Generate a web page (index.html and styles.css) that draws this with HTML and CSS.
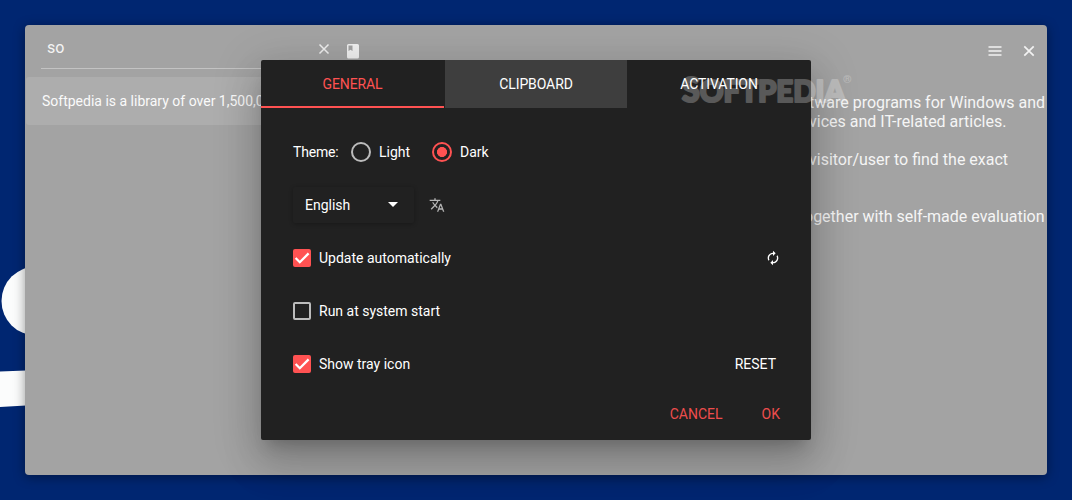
FILE: index.html
```html
<!DOCTYPE html>
<html lang="en">
<head>
<meta charset="utf-8">
<title>Clipboard settings</title>
<link rel="stylesheet" href="styles.css">
</head>
<body>
<div class="desktop">
  <svg class="wallpaper" width="26" height="500" viewBox="0 0 26 500"><circle cx="36" cy="301" r="34.500"/><path d="M0 371.500L26 370.500V405.500L0 407Z"/></svg>
  <main class="window">
    <section class="list-pane">
      <header class="search">
        <span class="query">so</span>
        <svg class="clear" width="12" height="12" viewBox="0 0 12 12"><path d="M1.500 1.500l9 9m0-9l-9 9"/></svg>
        <svg class="book" width="12" height="15" viewBox="0 0 12 15"><path fill-rule="evenodd" d="M1.500 0h9A1.500 1.500 0 0 1 12 1.500v11.500A1.500 1.500 0 0 1 10.500 14.500h-9A1.500 1.500 0 0 1 0 13V1.500A1.500 1.500 0 0 1 1.500 0zM1.500 1.500v5.500l2-1.300 2 1.300V1.500z"/></svg>
      </header>
      <div class="entry">Softpedia is a library of over 1,500,000</div>
    </section>
    <section class="preview">
      <nav class="window-actions">
        <svg width="14" height="12" viewBox="0 0 14 12"><path d="M.5 2h13M.5 6h13M.5 10h13"/></svg>
        <svg width="12" height="12" viewBox="0 0 12 12"><path d="M1.300 1.300l9.400 9.400m0-9.400l-9.400 9.400"/></svg>
      </nav>
      <div class="copy">
        <p>tware programs for Windows and</p>
        <p>vices and IT-related articles.</p>
        <p class="spaced">visitor/user to find the exact</p>
        <p class="last">ogether with self-made evaluation</p>
      </div>
    </section>
    <section class="dialog">
      <nav class="tabs">
        <span class="tab active">GENERAL</span>
        <span class="tab hover">CLIPBOARD</span>
        <span class="tab">ACTIVATION</span>
      </nav>
      <div class="options">
        <div class="row">
          <span class="theme">Theme:</span>
          <span class="radio"></span><span class="light">Light</span>
          <span class="radio on"></span><span>Dark</span>
        </div>
        <div class="row">
          <div class="select"><span>English</span><svg width="10" height="5" viewBox="0 0 10 5"><path d="M0 0h10L5 5z"/></svg></div>
          <svg class="translate" width="16" height="16" viewBox="0 0 24 24"><path d="M12.870 15.070l-2.540-2.510.03-.03A17.520 17.520 0 0 0 14.070 6H17V4h-7V2H8v2H1v2h11.170C11.500 7.920 10.440 9.750 9 11.350 8.070 10.320 7.300 9.190 6.690 8h-2c.73 1.630 1.730 3.170 2.980 4.560l-5.090 5.020L4 19l5-5 3.110 3.110.76-2.040zM18.500 10h-2L12 22h2l1.120-3h4.750L21 22h2l-4.500-12zm-2.620 7l1.620-4.330L19.120 17h-3.240z"/></svg>
        </div>
        <div class="row">
          <span class="check on"><svg width="18" height="18" viewBox="0 0 18 18"><path d="M2.600 9l4.200 4.200 8.800-8.800"/></svg></span><span>Update automatically</span>
          <svg class="refresh" width="16" height="16" viewBox="0 0 24 24"><path d="M12 6v3l4-4-4-4v3c-4.420 0-8 3.580-8 8 0 1.570.46 3.030 1.240 4.260L6.700 14.800A5.870 5.870 0 0 1 6 12c0-3.310 2.690-6 6-6zm6.760 1.740L17.300 9.200c.44.84.7 1.790.7 2.800 0 3.310-2.690 6-6 6v-3l-4 4 4 4v-3c4.420 0 8-3.580 8-8 0-1.570-.46-3.030-1.240-4.260z"/></svg>
        </div>
        <div class="row"><span class="check"></span><span>Run at system start</span></div>
        <div class="row">
          <span class="check on"><svg width="18" height="18" viewBox="0 0 18 18"><path d="M2.600 9l4.200 4.200 8.800-8.800"/></svg></span><span>Show tray icon</span>
          <span class="reset">RESET</span>
        </div>
      </div>
      <footer class="buttons"><span>CANCEL</span><span>OK</span></footer>
    </section>
  </main>
  <svg class="watermark" width="180" height="40" viewBox="0 0 180 40">
    <text class="brand" x="7" y="32" textLength="163" lengthAdjust="spacingAndGlyphs"><tspan class="initial">S</tspan>OFTPEDIA</text>
    <text class="mark" x="168" y="13">®</text>
  </svg>
</div>
</body>
</html>
```
FILE: styles.css
```css
* { box-sizing: border-box; }
body { margin: 0; font-family: Roboto, "Liberation Sans", sans-serif; }
.desktop { position: relative; width: 1072px; height: 500px; padding: 25px; background: #002671; overflow: hidden; }
.wallpaper { position: absolute; left: 0; top: 0; fill: #fbfcfc; }
.window { position: relative; display: flex; width: 1022px; height: 450px; background: #a3a3a3; border-radius: 4px; box-shadow: 0 2px 12px rgba(0,0,0,.4); }
.list-pane { width: 340px; }
.search { display: flex; margin-left: 16px; width: 320px; height: 44px; border-bottom: 1px solid #c3c3c3; color: #f4f4f4; }
.query { width: 272px; padding: 13px 0 0 6px; font-size: 16px; line-height: 20px; }
.clear { margin: 18px 0 0 5px; stroke: #f0f0f0; stroke-width: 1.500; fill: none; }
.book { margin: 19px 0 0 17px; fill: #f1f1f1; }
.entry { height: 48px; margin: 8px 0 0 1px; padding: 0 16px; background: #adadad; border-radius: 3px; color: #fafafa; font-size: 14px; line-height: 49px; white-space: nowrap; overflow: hidden; }
.preview { width: 682px; }
.window-actions { display: flex; justify-content: flex-end; gap: 21px; padding: 20px 12px 0 0; height: 68px; }
.window-actions svg { fill: none; stroke: #f2f2f2; stroke-width: 1.700; }
.copy { padding-left: 444px; color: #f5f5f5; font-size: 16px; line-height: 19px; white-space: nowrap; }
.copy p { margin: 0; }
.copy .spaced { margin-top: 19px; }
.copy .last { margin: 38px 0 0 -5px; }
.dialog { position: absolute; left: 236px; top: 35px; width: 550px; height: 380px; background: #212121; border-radius: 2px; color: #fff; font-size: 14px; box-shadow: 0 11px 15px -7px rgba(0,0,0,.2), 0 24px 38px 3px rgba(0,0,0,.14), 0 9px 46px 8px rgba(0,0,0,.12); }
.tabs { display: grid; grid-template: 48px / 183px 183px 184px; height: 48px; }
.tab { height: 48px; text-align: center; line-height: 48px; letter-spacing: -.1px; }
.tab.active { color: #ff5252; box-shadow: inset 0 -2px #ff5252; }
.tab.hover { background: #3e3e3e; margin-left: 1px; }
.options { padding: 17px 30px 0 32px; }
.row { display: flex; align-items: center; height: 53px; }
.theme { width: 58px; letter-spacing: -.2px; }
.radio { width: 20px; height: 20px; margin-right: 8px; border: 2px solid #bcbcbc; border-radius: 50%; }
.light { width: 53px; }
.radio.on { border-color: #ff5252; background: radial-gradient(circle, #ff5252 4.700px, transparent 5.300px); }
.select { display: flex; align-items: center; justify-content: space-between; width: 121px; height: 36px; padding: 0 16px 0 12px; border-radius: 2px; box-shadow: 0 1px 4px rgba(0,0,0,.28); }
.select svg { fill: #fff; }
.translate { margin-left: 15px; fill: #b5b5b5; }
.check { width: 18px; height: 18px; margin-right: 8px; border: 2px solid #bcbcbc; border-radius: 2px; }
.check.on { border: 0; background: #ff5252; }
.check svg { display: block; fill: none; stroke: #fff; stroke-width: 2.300; }
.refresh { margin-left: auto; fill: #fff; }
.reset { margin-left: auto; margin-right: 5px; }
.buttons { display: flex; justify-content: flex-end; gap: 39px; padding: 15px 31px 0 0; color: #ee4d4d; line-height: 18px; }
.watermark { position: absolute; left: 675px; top: 70px; fill: #fff; opacity: .25; }
.brand { font: 900 31px Lato, sans-serif; stroke: #fff; stroke-width: 2.200; stroke-linejoin: round; }
.initial { font-size: 34px; }
.mark { font: bold 11px Roboto, sans-serif; }
```
